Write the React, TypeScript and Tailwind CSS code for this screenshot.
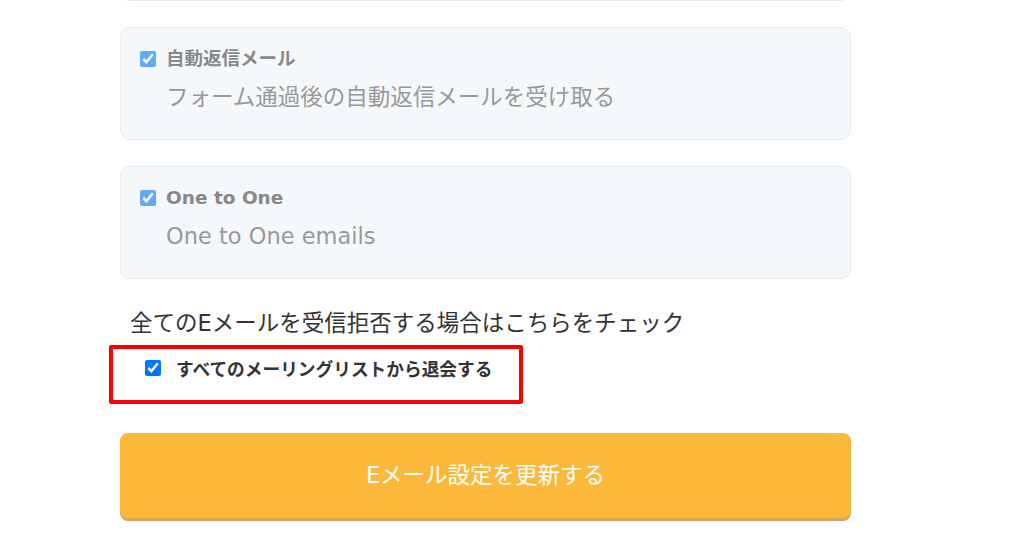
import React from "react";

const font = { fontFamily: '"DejaVu Sans", "Noto Sans CJK JP", sans-serif' };

function PrefCard({ title, desc }: { title: string; desc: string }) {
  return (
    <div className="rounded-[10px] border border-[#e6ebf0] bg-[#f5f8fb] px-[19px] pt-[19px] pb-[25px]">
      <label className="flex h-[24px] items-center gap-[10px]">
        <input
          type="checkbox"
          defaultChecked
          className="h-4 w-4 opacity-60 accent-[#0075ff]"
        />
        <span className="text-[18.5px] font-bold leading-none text-[#888888]">{title}</span>
      </label>
      <p className="mt-[10px] pl-[26px] text-[22.5px] leading-[33px] text-[#999999]">{desc}</p>
    </div>
  );
}

export default function App() {
  return (
    <div className="h-[546px] overflow-hidden bg-white" style={font}>
      <div className="ml-[120px] w-[731px]">
        {/* previous card, scrolled out of view */}
        <div className="-mt-[100px] h-[101px] rounded-[10px] border border-[#e6ebf0] bg-[#f5f8fb]" />

        <div className="mt-[26px] flex flex-col gap-[26px]">
          <PrefCard title="自動返信メール" desc="フォーム通過後の自動返信メールを受け取る" />
          <PrefCard title="One to One" desc="One to One emails" />
        </div>

        <p className="mt-[28px] pl-[10px] text-[22.5px] leading-[33px] text-[#333333]">
          全てのEメールを受信拒否する場合はこちらをチェック
        </p>

        <div className="-ml-[11px] mt-[5px] h-[59px] w-[414px] rounded-[2px] border-4 border-[#ff0000] pl-[32px]">
          <label className="flex items-start gap-[15px]">
            <input type="checkbox" defaultChecked className="mt-[11px] h-4 w-4 accent-[#0075ff]" />
            <span className="mt-[13px] text-[17.7px] font-bold leading-none text-[#333333]">
              すべてのメーリングリストから退会する
            </span>
          </label>
        </div>

        <button className="mt-[29px] flex h-[85px] w-full items-center justify-center rounded-[8px] bg-[#fcb83b] text-[22.5px] text-white shadow-[0_3px_0_#d7a95e]">
          Eメール設定を更新する
        </button>
      </div>
    </div>
  );
}
